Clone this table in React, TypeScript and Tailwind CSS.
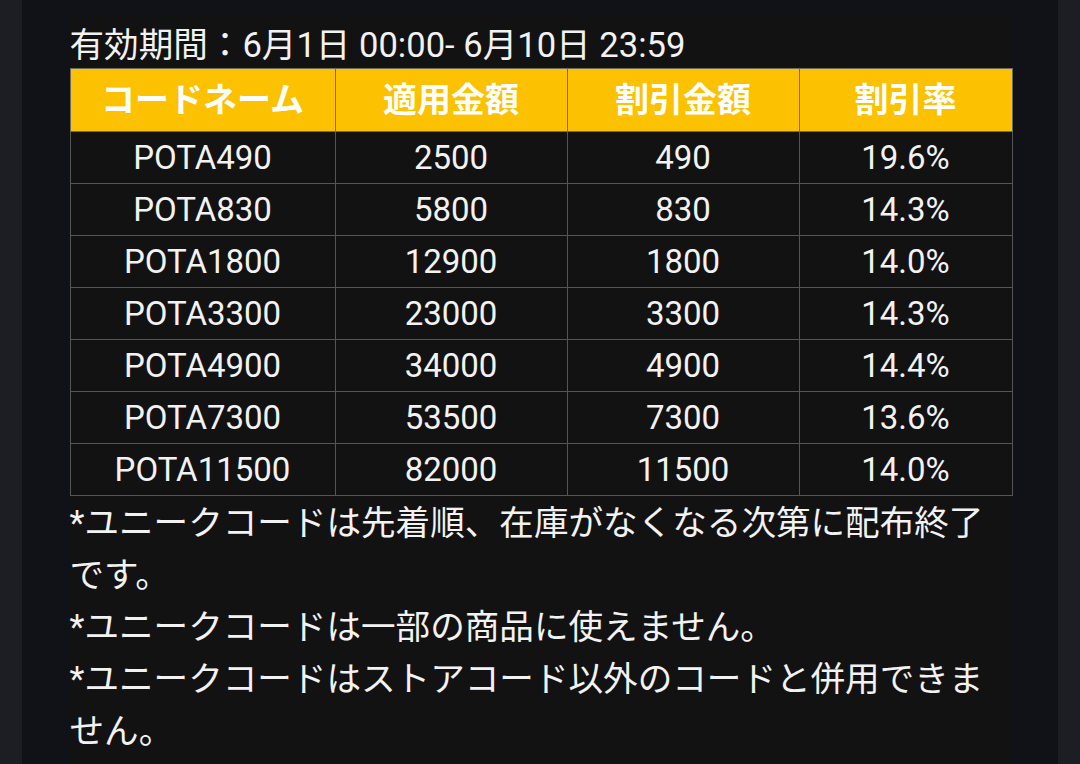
const rows = [
  ["POTA490", "2500", "490", "19.6%"],
  ["POTA830", "5800", "830", "14.3%"],
  ["POTA1800", "12900", "1800", "14.0%"],
  ["POTA3300", "23000", "3300", "14.3%"],
  ["POTA4900", "34000", "4900", "14.4%"],
  ["POTA7300", "53500", "7300", "13.6%"],
  ["POTA11500", "82000", "11500", "14.0%"],
]

const notes = [
  "*ユニークコードは先着順、在庫がなくなる次第に配布終了です。",
  "*ユニークコードは一部の商品に使えません。",
  "*ユニークコードはストアコード以外のコードと併用できません。",
]

export default function App() {
  return (
    <div
      className="h-[764px] w-[1080px] overflow-hidden bg-[#1d1e23] flex justify-center text-[#f2f2f2]"
      style={{ fontFamily: "Roboto, 'Noto Sans CJK JP', sans-serif" }}
    >
      <div className="w-[1036px] h-full bg-[#111218] flex justify-center pt-4">
        <main className="w-[943px] h-full bg-[#121212] pl-px">
          <div className="h-[52px] pt-[6px] text-[34.6px] leading-[46px] whitespace-nowrap">
            有効期間：6月1日 00:00- 6月10日 23:59
          </div>

          <table className="w-[942px] border-collapse table-fixed text-[33px] text-center">
            <colgroup>
              <col className="w-[265px]" />
              <col className="w-[232px]" />
              <col className="w-[232px]" />
              <col className="w-[213px]" />
            </colgroup>
            <thead>
              <tr className="h-[63px] bg-[#fcc100] text-white font-bold text-[34px]">
                <th className="border border-[#6e6a5c] p-0">コードネーム</th>
                <th className="border border-[#6e6a5c] p-0">適用金額</th>
                <th className="border border-[#6e6a5c] p-0">割引金額</th>
                <th className="border border-[#6e6a5c] p-0">割引率</th>
              </tr>
            </thead>
            <tbody>
              {rows.map((r) => (
                <tr key={r[0]} className="h-[52px]">
                  {r.map((c, i) => (
                    <td key={i} className="border border-[#555] p-0 leading-none">
                      {c}
                    </td>
                  ))}
                </tr>
              ))}
            </tbody>
          </table>

          <div className="text-[34.6px] leading-[52px] pt-[1px] pr-2">
            {notes.map((n) => (
              <p key={n}>{n}</p>
            ))}
          </div>
        </main>
      </div>
    </div>
  )
}
